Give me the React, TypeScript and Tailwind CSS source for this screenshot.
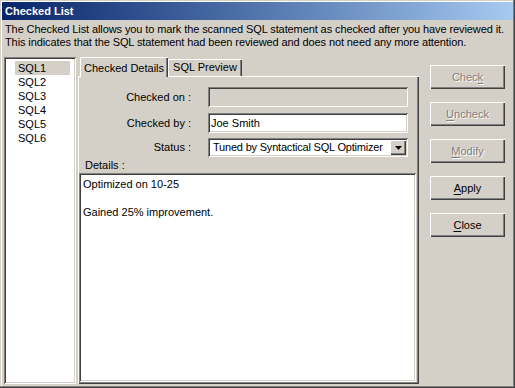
const raised = 'shadow-[inset_1px_1px_#ffffff,inset_-1px_-1px_#404040,inset_-2px_-2px_#808080]'
const sunken = 'shadow-[inset_1px_1px_#808080,inset_-1px_-1px_#ffffff,inset_2px_2px_#404040,inset_-2px_-2px_#d4d0c8]'

const items = ['SQL1', 'SQL2', 'SQL3', 'SQL4', 'SQL5', 'SQL6']

function Button({ label, mn, rest, pre = '', disabled = false }: { label?: string; mn: string; rest: string; pre?: string; disabled?: boolean }) {
  return (
    <div
      className={`h-[24px] w-[75px] flex items-center justify-center ${raised} ${
        disabled ? 'text-[#808080] [text-shadow:1px_1px_#ffffff]' : 'text-black'
      }`}
      title={label}
    >
      <span>
        {pre}
        <span className="underline underline-offset-[2px]">{mn}</span>
        {rest}
      </span>
    </div>
  )
}

function FieldRow({ label, children, h, className = '' }: { label: string; children: React.ReactNode; h: string; className?: string }) {
  return (
    <div className={`flex items-center ${h} ${className}`}>
      <div className="w-[113px] text-right whitespace-nowrap">{label}</div>
      <div className="ml-[17px] w-[200px] h-full">{children}</div>
    </div>
  )
}

export default function App() {
  return (
    <div className="w-[515px] h-[388px] bg-[#d4d0c8] p-[2px] flex flex-col text-[11px] text-black font-['Liberation_Sans',Arial,sans-serif] shadow-[inset_-1px_-1px_#404040,inset_-2px_-2px_#808080,inset_1px_1px_#d4d0c8,inset_2px_2px_#ffffff]">
      {/* Title bar */}
      <div className="h-[18px] bg-linear-to-r from-[#0a246a] to-[#a6caf0] pl-[3px] flex items-center text-white font-bold">
        Checked List
      </div>

      {/* Description */}
      <div className="pl-[3px] pt-[3px] leading-[13px] whitespace-nowrap tracking-[-0.1px]">
        <p>The Checked List allows you to mark the scanned SQL statement as checked after you have reviewed it.</p>
        <p>This indicates that the SQL statement had been reviewed and does not need any more attention.</p>
      </div>

      <div className="flex mt-[8px] pl-[2px] h-[327px]">
        {/* List box */}
        <div className={`w-[72px] h-full bg-white pt-[4px] pl-[11px] ${sunken}`}>
          {items.map((s, i) => (
            <div
              key={s}
              className={`w-[55px] h-[14px] leading-[14px] pl-[3px] ${i === 0 ? 'bg-[#d4d0c8]' : ''}`}
            >
              {s}
            </div>
          ))}
        </div>

        {/* Tabs */}
        <div className="ml-[2px] w-[341px] flex flex-col">
          <div className="flex items-end h-[19px] pl-[2px]">
            <div className="relative z-10 h-[20px] w-[88px] -mb-[1px] bg-[#d4d0c8] flex items-start justify-center pt-[3px] shadow-[inset_1px_1px_#ffffff,inset_-1px_0_#404040,inset_-2px_0_#808080]">
              Checked Details
            </div>
            <div className="h-[17px] w-[74px] flex items-center justify-center shadow-[inset_1px_1px_#ffffff,inset_-1px_0_#404040,inset_-2px_0_#808080]">
              SQL Preview
            </div>
          </div>
          <div className={`flex-1 flex flex-col pt-[11px] pb-[2px] ${raised}`}>
            <FieldRow label="Checked on :" h="h-[20px]">
              <div className={`w-full h-full bg-[#d4d0c8] ${sunken}`} />
            </FieldRow>
            <FieldRow label="Checked by :" h="h-[20px]" className="mt-[6px]">
              <div className={`w-full h-full bg-white pl-[3px] flex items-center ${sunken}`}>Joe Smith</div>
            </FieldRow>
            <FieldRow label="Status :" h="h-[19px]" className="mt-[5px]">
              <div className={`w-full h-full bg-white pl-[5px] pr-[2px] flex items-center justify-between ${sunken}`}>
                <span className="whitespace-nowrap tracking-[-0.2px]">Tuned by Syntactical SQL Optimizer</span>
                <div className={`w-[16px] h-[15px] bg-[#d4d0c8] flex items-center justify-center ${raised}`}>
                  <svg width="7" height="4" viewBox="0 0 7 4">
                    <path d="M0 0h7L3.5 4z" fill="#000" />
                  </svg>
                </div>
              </div>
            </FieldRow>
            <div className="mt-[2px] pl-[7px] leading-[13px]">Details :</div>
            <div className={`mt-[1px] ml-[1px] w-[337px] flex-1 bg-white pl-[4px] pt-[4px] leading-[14px] ${sunken}`}>
              <p>Optimized on 10-25</p>
              <p>&nbsp;</p>
              <p>Gained 25% improvement.</p>
            </div>
          </div>
        </div>

        {/* Buttons */}
        <div className="ml-[11px] w-[75px] pt-[8px] flex flex-col gap-[13px]">
          <Button pre="Chec" mn="k" rest="" disabled />
          <Button mn="U" rest="ncheck" disabled />
          <Button mn="M" rest="odify" disabled />
          <Button mn="A" rest="pply" />
          <Button mn="C" rest="lose" />
        </div>
      </div>
    </div>
  )
}
